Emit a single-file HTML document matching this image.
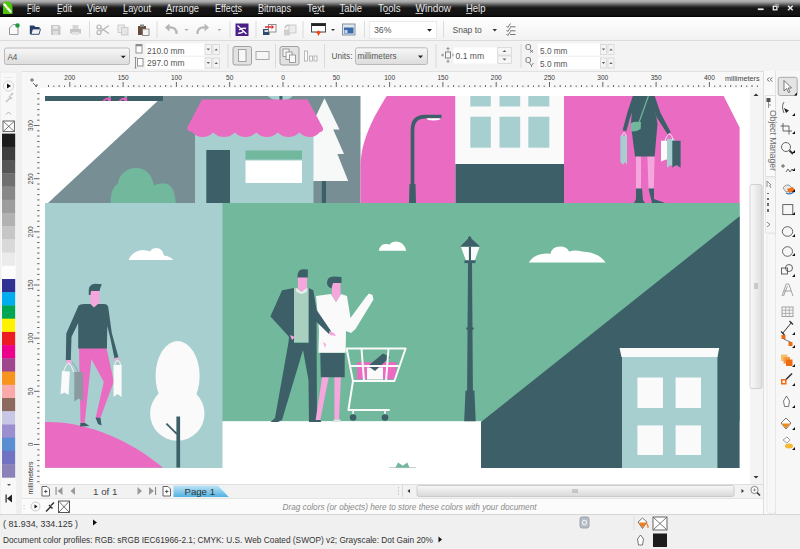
<!DOCTYPE html>
<html><head><meta charset="utf-8">
<style>
*{box-sizing:border-box}
html,body{margin:0;padding:0}
body{width:800px;height:549px;overflow:hidden;position:relative;background:#f0f0f0;font-family:"Liberation Sans",sans-serif;color:#333}
.a{position:absolute}
#menu{left:0;top:0;width:800px;height:17px;background:linear-gradient(#b8b8b8 0px,#a4a4a4 2px,#3a3a3a 6px,#161616 8px,#121212 15px,#000 17px)}
#menu span{position:absolute;top:3px;font-size:10px;color:#e6e6e6;line-height:12px}
#tb{left:0;top:17px;width:800px;height:24px;background:linear-gradient(#fefefe,#f3f3f3);border-bottom:1px solid #dcdcdc}
#pb{left:0;top:41px;width:800px;height:30px;background:#f3f3f3}
.sep{position:absolute;width:1px;background:#d8d8d8}
.fld{position:absolute;background:#fff;font-size:9.5px;color:#555;line-height:12px}
.combo{position:absolute;background:linear-gradient(#fafafa,#dedede);border:1px solid #b8b8b8;border-radius:2px;font-size:9.5px;color:#444}
#ruler-h{left:22px;top:71px;width:741px;height:17px;background:#f7f7f7;border-top:1px solid #e0e0e0}
#ruler-v{left:22px;top:88px;width:18px;height:410px;background:#f7f7f7}
#canvas{left:40px;top:88px;width:710px;height:396px;background:#fff}
#vscroll{left:750px;top:88px;width:13px;height:396px;background:#f4f4f4}
#nav{left:40px;top:484px;width:723px;height:14px;background:#f2f2f2;border-top:1px solid #dedede}
#dock{left:22px;top:498px;width:741px;height:16px;background:#fbfbfb;border-top:1px solid #e4e4e4}
#status{left:0;top:514px;width:800px;height:35px;background:#f0f0f0;border-top:1px solid #d6d6d6}
#pal{left:1px;top:73px;width:15px;height:441px;background:#f8f8f8}
#rdock{left:763px;top:71px;width:12px;height:443px;background:#f9f9f9;border-left:1px solid #ddd}
#tools{left:775px;top:71px;width:25px;height:443px;background:#f7f7f7;border-left:1px solid #e2e2e2}
.t9{font-size:9px;line-height:10px}
</style></head><body>
<div id="menu" class="a"></div>
<div id="tb" class="a"></div>
<div id="pb" class="a"></div>
<div id="ruler-h" class="a"></div>
<div id="ruler-v" class="a"></div>
<div id="canvas" class="a"></div>
<div id="vscroll" class="a"></div>
<div id="nav" class="a"></div>
<div id="dock" class="a"></div>
<div id="status" class="a"></div>
<div id="pal" class="a"></div>
<div id="rdock" class="a"></div>
<div id="tools" class="a"></div>

<svg class="a" style="left:0;top:0" width="800" height="549" viewBox="0 0 800 549">
<defs>
 <linearGradient id="gcombo" x1="0" y1="0" x2="0" y2="1"><stop offset="0" stop-color="#f8f8f8"/><stop offset="1" stop-color="#dcdcdc"/></linearGradient>
 <linearGradient id="gvthumb" x1="0" y1="0" x2="1" y2="0"><stop offset="0" stop-color="#fafafa"/><stop offset="1" stop-color="#dedede"/></linearGradient>
 <linearGradient id="ghthumb" x1="0" y1="0" x2="0" y2="1"><stop offset="0" stop-color="#f8f8f8"/><stop offset="1" stop-color="#d8d8d8"/></linearGradient>
 <linearGradient id="gtab" x1="0" y1="0" x2="0" y2="1"><stop offset="0" stop-color="#bfe3f5"/><stop offset="1" stop-color="#4fb2e2"/></linearGradient>
</defs>
<g id="chrome-top">
<g id="menutext" font-family="Liberation Sans" font-size="10.5" fill="#e8e8e8">
<text x="27" y="12" textLength="13" lengthAdjust="spacingAndGlyphs">File</text>
<rect x="27" y="13" width="4" height="0.8"/>
<text x="57" y="12" textLength="15" lengthAdjust="spacingAndGlyphs">Edit</text>
<rect x="57" y="13" width="4" height="0.8"/>
<text x="87" y="12" textLength="20" lengthAdjust="spacingAndGlyphs">View</text>
<rect x="87" y="13" width="5" height="0.8"/>
<text x="123" y="12" textLength="28" lengthAdjust="spacingAndGlyphs">Layout</text>
<rect x="123" y="13" width="4.5" height="0.8"/>
<text x="166" y="12" textLength="33" lengthAdjust="spacingAndGlyphs">Arrange</text>
<rect x="166" y="13" width="6" height="0.8"/>
<text x="215" y="12" textLength="27" lengthAdjust="spacingAndGlyphs">Effects</text>
<rect x="233" y="13" width="5" height="0.8"/>
<text x="258" y="12" textLength="33" lengthAdjust="spacingAndGlyphs">Bitmaps</text>
<rect x="258" y="13" width="5" height="0.8"/>
<text x="307" y="12" textLength="17.5" lengthAdjust="spacingAndGlyphs">Text</text>
<rect x="314" y="13" width="5" height="0.8"/>
<text x="339.5" y="12" textLength="22.5" lengthAdjust="spacingAndGlyphs">Table</text>
<rect x="339.5" y="13" width="4.5" height="0.8"/>
<text x="378" y="12" textLength="22.5" lengthAdjust="spacingAndGlyphs">Tools</text>
<rect x="385" y="13" width="5" height="0.8"/>
<text x="415.5" y="12" textLength="35.5" lengthAdjust="spacingAndGlyphs">Window</text>
<rect x="415.5" y="13" width="7.5" height="0.8"/>
<text x="466" y="12" textLength="19.5" lengthAdjust="spacingAndGlyphs">Help</text>
<rect x="466" y="13" width="6" height="0.8"/>
</g>
 <!-- corel logo -->
 <path d="M3.5,2.5 Q4,1.5 6,1.5 L9,1.5 Q12.5,3 12.5,8 L12.5,14 L3,14 L3,4 Z" fill="#4fc410"/>
 <path d="M4.5,4.5 L10.5,11.5" stroke="#f4fbe8" stroke-width="2.4" stroke-linecap="round"/>
 <path d="M6.5,5.5 L8.5,8" stroke="#b8d850" stroke-width="1"/>
 <!-- window controls -->
 <rect x="757.8" y="8.4" width="5.8" height="1.7" fill="#eee"/>
 <rect x="773.3" y="6.2" width="3.6" height="3.6" fill="none" stroke="#eee" stroke-width="1.3"/>
 <path d="M775,4.3 H778.3 V7.8" stroke="#bbb" stroke-width="0.8" fill="none"/>
 <path d="M788,5.8 L792.7,10.3 M792.7,5.8 L788,10.3" stroke="#eee" stroke-width="1.5"/>
 <!-- toolbar separators -->
 <g fill="#dcdcdc">
  <rect x="89" y="21" width="1" height="17"/><rect x="156.5" y="21" width="1" height="17"/>
  <rect x="229.5" y="21" width="1" height="17"/><rect x="255.5" y="21" width="1" height="17"/>
  <rect x="302.5" y="21" width="1" height="17"/><rect x="364" y="21" width="1" height="17"/>
  <rect x="443" y="21" width="1" height="17"/>
 </g>
 <!-- new -->
 <path d="M9.5,34.5 V28 L13,24.5 H18 V34.5 Z" fill="#fafafa" stroke="#8a8a8a" stroke-width="0.9"/>
 <circle cx="17.5" cy="25.5" r="2.2" fill="#1f9a3a"/>
 <!-- open -->
 <path d="M29.8,34.3 V25.5 H34 L35.5,27 H39.5 V34.3 Z" fill="#243e6a"/>
 <path d="M31,34.3 L32.5,29 H40.5 L39,34.3 Z" fill="#f2f2f2" stroke="#243e6a" stroke-width="0.8"/>
 <!-- save -->
 <path d="M51,25 H59 L60.5,26.5 V35 H51 Z" fill="#c8c8c8"/>
 <rect x="53" y="26" width="5" height="3" fill="#e8e8e8"/><rect x="53" y="31" width="5" height="4" fill="#dedede"/>
 <!-- print -->
 <rect x="72.5" y="25" width="6" height="4" fill="#d6d6d6"/>
 <rect x="70" y="29" width="11" height="4.5" fill="#c6c6c6"/><rect x="72" y="32" width="7" height="3" fill="#e2e2e2"/>
 <!-- cut -->
 <g stroke="#b4b4b4" stroke-width="1.2" fill="none"><circle cx="99" cy="27" r="2"/><circle cx="99" cy="32.5" r="2"/><path d="M100.5,28 L109,33.5 M100.5,31.5 L109,25.5"/></g>
 <!-- copy -->
 <rect x="118" y="25" width="6.5" height="7.5" fill="#eee" stroke="#c8c8c8" stroke-width="0.9"/>
 <rect x="121.5" y="27.5" width="6.5" height="7.5" fill="#e6e6e6" stroke="#c8c8c8" stroke-width="0.9"/>
 <!-- paste -->
 <rect x="138" y="26" width="8" height="9" fill="#6a4a3a"/><rect x="140" y="24.5" width="4" height="2.5" fill="#888"/>
 <rect x="142.5" y="29" width="6.5" height="6.5" fill="#f4f4f4" stroke="#777" stroke-width="0.8"/>
 <!-- undo/redo -->
 <path d="M176.5,34 Q177,27 169,27.5 L166.5,27.5" stroke="#b4b4b4" stroke-width="2.2" fill="none"/>
 <path d="M165,27.5 L169.5,23.5 L169.5,31.5 Z" fill="#b4b4b4"/>
 <path d="M184.5,29 H188.5 L186.5,31 Z" fill="#aaa"/>
 <path d="M197.5,34 Q197,27 205,27.5 L207.5,27.5" stroke="#b8b8b8" stroke-width="2.2" fill="none"/>
 <path d="M209,27.5 L204.5,23.5 L204.5,31.5 Z" fill="#b8b8b8"/>
 <path d="M217.5,29 H221.5 L219.5,31 Z" fill="#aaa"/>
 <!-- purple corel connect -->
 <rect x="235.5" y="23.5" width="13" height="12.5" fill="#4a1f8a"/>
 <path d="M237.5,25.5 L246.5,34 M239,30 Q242,27.5 246,28.5 M238,33 Q241,34 244,31" stroke="#fff" stroke-width="1.3" fill="none"/>
 <!-- import / export -->
 <rect x="263" y="29" width="6.5" height="6" fill="#2e4a6a"/><rect x="264.5" y="30" width="3.5" height="2" fill="#ddd"/>
 <rect x="268.5" y="24.5" width="7.5" height="7.5" fill="#fafafa" stroke="#777" stroke-width="0.8"/>
 <path d="M265,27 H271.5" stroke="#e02020" stroke-width="1.4"/><path d="M271.5,24.8 L274,27 L271.5,29.2 Z" fill="#e02020"/>
 <rect x="284" y="29.5" width="6" height="6" fill="#d0d0d0"/><rect x="289" y="25" width="7" height="8" fill="#ececec" stroke="#c4c4c4" stroke-width="0.8"/>
 <path d="M285,28 Q286,24.5 289,25.5" stroke="#c0c0c0" stroke-width="1.4" fill="none"/>
 <!-- app launcher -->
 <rect x="311.5" y="23.5" width="14" height="8.5" fill="#fdfdfd" stroke="#444" stroke-width="1"/>
 <rect x="311.5" y="23.5" width="14" height="2.5" fill="#222"/>
 <path d="M315.5,33 L318.5,30.5 L321.5,33 L320,33 L318.5,36 L317,33 Z" fill="#f04010"/>
 <path d="M331,29 H335 L333,31 Z" fill="#333"/>
 <!-- welcome -->
 <rect x="342.5" y="24" width="12.5" height="11" fill="#dfe6ee" stroke="#7a8a9a" stroke-width="0.9"/>
 <rect x="344" y="27.5" width="9.5" height="6" fill="#3a6aa8"/><rect x="344.5" y="30" width="3" height="3" fill="#c8d8ec"/>
 <!-- zoom combo -->
 <rect x="369.5" y="21.5" width="67" height="17" fill="#fff" stroke="#e4e4e4" stroke-width="0.8"/>
 <text x="374" y="33.2" font-family="Liberation Sans" font-size="9.5" fill="#555" textLength="17.5" lengthAdjust="spacingAndGlyphs">36%</text>
 <path d="M427,29 H432 L429.5,31.7 Z" fill="#222"/>
 <text x="452.5" y="33" font-family="Liberation Sans" font-size="9.5" fill="#555" textLength="29.3" lengthAdjust="spacingAndGlyphs">Snap to</text>
 <path d="M492.5,29 H497 L494.8,31.5 Z" fill="#333"/>
 <g stroke="#666" stroke-width="0.9" fill="none"><path d="M506.5,26 L507.8,27.5 L510.5,23.5 M506.5,30 L507.8,31.5 L510.5,27.5 M506.5,34 L507.8,35.5 L510.5,31.5 M510,26.8 H515.5 M510,30.8 H515.5 M510,34.5 H515.5"/></g>

 <!-- property bar -->
 <rect x="4.5" y="48" width="125" height="16.5" rx="2" fill="url(#gcombo)" stroke="#b4b4b4" stroke-width="0.9"/>
 <text x="7.4" y="60" font-family="Liberation Sans" font-size="9.8" fill="#555" textLength="10" lengthAdjust="spacingAndGlyphs">A4</text>
 <path d="M120.7,55.7 H125.8 L123.25,58.2 Z" fill="#222"/>
 <!-- dims -->
 <rect x="136" y="44.5" width="6" height="8.5" fill="#fff" stroke="#8a8a8a" stroke-width="0.9"/>
 <rect x="136" y="44.5" width="6" height="1.8" fill="#8a8a8a"/>
 <path d="M135.5,57.5 V68 M134.5,57.5 H136.5 M134.5,68 H136.5" stroke="#777" stroke-width="0.8"/>
 <rect x="137.5" y="58.5" width="5.5" height="7.5" fill="#fff" stroke="#8a8a8a" stroke-width="0.9"/>
 <rect x="145.5" y="43.5" width="59.5" height="12" fill="#fff"/>
 <rect x="145.5" y="57" width="59.5" height="12" fill="#fff"/>
 <text x="147" y="53.6" font-family="Liberation Sans" font-size="9.6" fill="#555" textLength="37.5" lengthAdjust="spacingAndGlyphs">210.0 mm</text>
 <text x="147" y="66.4" font-family="Liberation Sans" font-size="9.6" fill="#555" textLength="37.5" lengthAdjust="spacingAndGlyphs">297.0 mm</text>
 <g fill="#f4f4f4" stroke="#d0d0d0" stroke-width="0.7">
  <rect x="205" y="44.5" width="6.5" height="10"/><rect x="213" y="44.5" width="6.5" height="10"/>
  <rect x="205" y="58" width="6.5" height="10"/><rect x="213" y="58" width="6.5" height="10"/>
 </g>
 <g fill="#666"><path d="M206.5,48.5 H210 L208.25,50.5 Z M214.5,50.5 H218 L216.25,48.5 Z M206.5,62 H210 L208.25,64 Z M214.5,64 H218 L216.25,62 Z"/></g>
 <rect x="227.5" y="44" width="1" height="24" fill="#dadada"/>
 <rect x="233" y="46.5" width="18.5" height="18.5" rx="2" fill="#e2e2e2" stroke="#9a9a9a" stroke-width="0.9"/>
 <rect x="238.5" y="49.5" width="7.5" height="12" fill="#f8f8f8" stroke="#9a9a9a" stroke-width="0.9"/>
 <rect x="256" y="51.5" width="13" height="8" fill="#f6f6f6" stroke="#a0a0a0" stroke-width="0.9"/>
 <rect x="275" y="44" width="1" height="24" fill="#dadada"/>
 <rect x="280" y="46.5" width="19" height="18.5" rx="2" fill="#e2e2e2" stroke="#9a9a9a" stroke-width="0.9"/>
 <rect x="283" y="49" width="6" height="7.5" fill="#f8f8f8" stroke="#888" stroke-width="0.8"/>
 <rect x="286" y="52" width="6" height="7.5" fill="#f8f8f8" stroke="#888" stroke-width="0.8"/>
 <rect x="289.5" y="55" width="6" height="7.5" fill="#f8f8f8" stroke="#888" stroke-width="0.8"/>
 <g fill="#fafafa" stroke="#aaa" stroke-width="0.8"><rect x="304.5" y="51" width="3" height="10"/><rect x="309.5" y="56" width="3" height="5"/><rect x="314" y="56" width="3" height="5"/></g>
 <rect x="324" y="44" width="1" height="24" fill="#dadada"/>
 <text x="331.5" y="59" font-family="Liberation Sans" font-size="9.5" fill="#555" textLength="21" lengthAdjust="spacingAndGlyphs">Units:</text>
 <rect x="355.5" y="47.8" width="72" height="16.7" rx="2" fill="url(#gcombo)" stroke="#b4b4b4" stroke-width="0.9"/>
 <text x="357.5" y="59.2" font-family="Liberation Sans" font-size="9.5" fill="#555" textLength="39" lengthAdjust="spacingAndGlyphs">millimeters</text>
 <path d="M418,55.5 H423 L420.5,58.2 Z" fill="#222"/>
 <rect x="435.5" y="44" width="1" height="24" fill="#dadada"/>
 <g stroke="#777" stroke-width="0.9" fill="none"><rect x="445.5" y="52" width="5" height="6"/><path d="M448,48 V50.5 M448,59.5 V62 M442,55 H444 M452,55 H454.5"/></g>
 <path d="M446.5,49 L448,47.5 L449.5,49 M446.5,61 L448,62.5 L449.5,61 M443,53.5 L441.5,55 L443,56.5 M453,53.5 L454.5,55 L453,56.5" stroke="#777" stroke-width="0.8" fill="none"/>
 <rect x="453.6" y="47.5" width="43.5" height="16" fill="#fff"/>
 <text x="455.5" y="59" font-family="Liberation Sans" font-size="9.6" fill="#555" textLength="28.7" lengthAdjust="spacingAndGlyphs">0.1 mm</text>
 <rect x="497.8" y="47.5" width="13.5" height="7.5" fill="#f6f6f6" stroke="#d0d0d0" stroke-width="0.7"/>
 <rect x="497.8" y="56" width="13.5" height="7.5" fill="#f6f6f6" stroke="#d0d0d0" stroke-width="0.7"/>
 <path d="M502.5,52 H506.5 L504.5,50 Z M502.5,58.5 H506.5 L504.5,60.5 Z" fill="#666"/>
 <rect x="520.5" y="44" width="1" height="24" fill="#dadada"/>
 <g fill="none" stroke="#777" stroke-width="0.9"><rect x="526" y="44.5" width="4.5" height="5" rx="1.5"/><rect x="526" y="57.5" width="4.5" height="5" rx="1.5"/></g>
 <path d="M530,50 L533,52.5 M533,50 L530,52.5 M529.5,63 L531.5,65.5 L533.5,63 M531.5,65.5 V67" stroke="#666" stroke-width="0.8" fill="none"/>
 <rect x="538" y="43.5" width="62" height="12" fill="#fff"/>
 <rect x="538" y="57" width="62" height="12" fill="#fff"/>
 <text x="540" y="53.5" font-family="Liberation Sans" font-size="9.6" fill="#555" textLength="27.5" lengthAdjust="spacingAndGlyphs">5.0 mm</text>
 <text x="540" y="66.5" font-family="Liberation Sans" font-size="9.6" fill="#555" textLength="27.5" lengthAdjust="spacingAndGlyphs">5.0 mm</text>
 <g fill="#f4f4f4" stroke="#d0d0d0" stroke-width="0.7">
  <rect x="600.5" y="44.5" width="6" height="10"/><rect x="608" y="44.5" width="6" height="10"/>
  <rect x="600.5" y="58" width="6" height="10"/><rect x="608" y="58" width="6" height="10"/>
 </g>
 <g fill="#666"><path d="M601.8,48.5 H605.2 L603.5,50.5 Z M609.3,50.5 H612.7 L611,48.5 Z M601.8,62 H605.2 L603.5,64 Z M609.3,64 H612.7 L611,62 Z"/></g>
</g>
<g id="chrome-main">
 <!-- palette -->
 <g stroke="#d8d8d8" stroke-width="0.6">
 </g>
 <text x="4" y="78" font-family="Liberation Sans" font-size="7" fill="#aaa" letter-spacing="1">...</text>
 <circle cx="8.5" cy="86" r="5" fill="#fbfbfb" stroke="#c8c8c8" stroke-width="0.8"/>
 <path d="M7,83.5 L11,86 L7,88.5 Z" fill="#111"/>
 <path d="M6,102 L10,98 M9,96 L12,99 M10.5,95.5 L13,93" stroke="#c4c4c4" stroke-width="1.6"/>
 <path d="M6,114.5 L8.5,112 L11,114.5" stroke="#b0b0b0" stroke-width="1" fill="none"/>
 <rect x="3" y="121" width="11.4" height="10.6" fill="#fff" stroke="#555" stroke-width="0.9"/>
 <path d="M3.5,121.5 L14,131.2 M14,121.5 L3.5,131.2" stroke="#555" stroke-width="0.8"/>
 <g id="swatches">
  <rect x="2" y="133.60" width="13.2" height="13.6" fill="#1c1c1c"/>
  <rect x="2" y="146.82" width="13.2" height="13.6" fill="#3d3d3d"/>
  <rect x="2" y="160.04" width="13.2" height="13.6" fill="#565656"/>
  <rect x="2" y="173.26" width="13.2" height="13.6" fill="#6f6f6f"/>
  <rect x="2" y="186.48" width="13.2" height="13.6" fill="#878787"/>
  <rect x="2" y="199.70" width="13.2" height="13.6" fill="#9d9d9d"/>
  <rect x="2" y="212.92" width="13.2" height="13.6" fill="#b2b2b2"/>
  <rect x="2" y="226.14" width="13.2" height="13.6" fill="#c6c6c6"/>
  <rect x="2" y="239.36" width="13.2" height="13.6" fill="#d9d9d9"/>
  <rect x="2" y="252.58" width="13.2" height="13.6" fill="#ebebeb"/>
  <rect x="2" y="265.80" width="13.2" height="13.6" fill="#fdfdfd"/>
  <rect x="2" y="279.02" width="13.2" height="13.6" fill="#2e3192"/>
  <rect x="2" y="292.24" width="13.2" height="13.6" fill="#00aeef"/>
  <rect x="2" y="305.46" width="13.2" height="13.6" fill="#00a651"/>
  <rect x="2" y="318.68" width="13.2" height="13.6" fill="#fff200"/>
  <rect x="2" y="331.90" width="13.2" height="13.6" fill="#ed1c24"/>
  <rect x="2" y="345.12" width="13.2" height="13.6" fill="#ec008c"/>
  <rect x="2" y="358.34" width="13.2" height="13.6" fill="#a0468e"/>
  <rect x="2" y="371.56" width="13.2" height="13.6" fill="#f7941d"/>
  <rect x="2" y="384.78" width="13.2" height="13.6" fill="#f9aaaa"/>
  <rect x="2" y="398.00" width="13.2" height="13.6" fill="#8c6b5e"/>
  <rect x="2" y="411.22" width="13.2" height="13.6" fill="#c8c8e6"/>
  <rect x="2" y="424.44" width="13.2" height="13.6" fill="#9b8fcf"/>
  <rect x="2" y="437.66" width="13.2" height="13.6" fill="#5a8ed0"/>
  <rect x="2" y="450.88" width="13.2" height="13.6" fill="#7272c2"/>
  <rect x="2" y="464.10" width="13.2" height="13.6" fill="#8a82b8"/>
 </g>
 <path d="M7,484 H11 L9,486 Z" fill="#555"/>
 <rect x="5.5" y="494.5" width="1.2" height="8" fill="#222"/><path d="M12,494.5 L7,498.5 L12,502.5 Z" fill="#222"/>

 <!-- vertical scrollbar -->
 <path d="M753.5,96 L756,93.5 L758.5,96 Z" fill="#333"/>
 <rect x="750" y="184.5" width="12" height="204" rx="2" fill="url(#gvthumb)" stroke="#c8c8c8" stroke-width="0.8"/>
 <path d="M754,284 H758 M754,286 H758 M754,288 H758" stroke="#888" stroke-width="0.7"/>
 <path d="M753.5,476 H758.5 L756,478.5 Z" fill="#333"/>
 <!-- page nav row -->
 <g stroke="#555" stroke-width="0.9" fill="#fff">
  <path d="M42,486.5 H47 L49.5,489 V496 H42 Z"/>
  <path d="M163,486.5 H168 L170.5,489 V496 H163 Z"/>
 </g>
 <path d="M44,491.5 H47.5 M45.75,489.75 V493.25 M165,491.5 H168.5 M166.75,489.75 V493.25" stroke="#333" stroke-width="0.8"/>
 <rect x="55.5" y="487" width="1.1" height="8" fill="#888"/><path d="M62.5,487 L57.5,491 L62.5,495 Z" fill="#999"/>
 <path d="M75,487 L70.5,491 L75,495 Z" fill="#999"/>
 <text x="93" y="495.2" font-family="Liberation Sans" font-size="9.8" fill="#444" textLength="24.5" lengthAdjust="spacingAndGlyphs">1 of 1</text>
 <path d="M137.5,487 L142,491 L137.5,495 Z" fill="#999"/>
 <path d="M149,487 L154,491 L149,495 Z" fill="#999"/><rect x="155" y="487" width="1.1" height="8" fill="#888"/>
 <path d="M173.5,485.5 H218 L229,497 H173.5 Z" fill="url(#gtab)"/>
 <path d="M218,485.5 L223,485.5 L229,497" fill="#e9f4fa"/>
 <text x="184.5" y="495" font-family="Liberation Sans" font-size="9.8" fill="#333" textLength="30.5" lengthAdjust="spacingAndGlyphs">Page 1</text>
 <!-- hscroll -->
 <g fill="#aaa"><circle cx="398.5" cy="487.8" r="0.6"/><circle cx="398.5" cy="490.8" r="0.6"/><circle cx="398.5" cy="493.8" r="0.6"/></g>
 <rect x="402" y="485" width="1" height="12" fill="#dadada"/>
 <path d="M407.5,491 L410,489 L410,493 Z" fill="#333"/>
 <rect x="417" y="485.5" width="317" height="11" rx="2" fill="url(#ghthumb)" stroke="#c4c4c4" stroke-width="0.8"/>
 <path d="M573,489 V493 M575,489 V493 M577,489 V493" stroke="#888" stroke-width="0.7"/>
 <path d="M741.5,489 L744,491 L741.5,493 Z" fill="#333"/>
 <circle cx="754.5" cy="490" r="3.6" fill="#fff" stroke="#777" stroke-width="0.9"/>
 <path d="M752.8,490 H756.2 M754.5,488.3 V491.7" stroke="#777" stroke-width="0.7"/>
 <path d="M757,492.5 L760,495.5" stroke="#333" stroke-width="1.6"/>
 <!-- color docker row -->
 <text x="23" y="509" font-family="Liberation Sans" font-size="7" fill="#999" letter-spacing="0.5">:</text>
 <circle cx="35.5" cy="506.5" r="4.5" fill="#fbfbfb" stroke="#bbb" stroke-width="0.8"/>
 <path d="M34.5,504.5 L37.5,506.5 L34.5,508.5 Z" fill="#111"/>
 <path d="M46,511.5 L50.5,507 M49,505 L52.5,508.5 M51,505.5 L54,502.5" stroke="#333" stroke-width="1.5"/>
 <rect x="58.5" y="501" width="11" height="11.5" fill="#fff" stroke="#444" stroke-width="0.9"/>
 <path d="M59,501.5 L69,512 M69,501.5 L59,512" stroke="#444" stroke-width="0.8"/>
 <text x="282.5" y="510" font-family="Liberation Sans" font-style="italic" font-size="8.5" fill="#8a8a8a" textLength="254" lengthAdjust="spacingAndGlyphs">Drag colors (or objects) here to store these colors with your document</text>
 <!-- status bar -->
 <text x="3" y="526.5" font-family="Liberation Sans" font-size="9.6" fill="#333" textLength="75" lengthAdjust="spacingAndGlyphs">( 81.934, 334.125 )</text>
 <path d="M93,519.5 L97,522.5 L93,525.5 Z" fill="#111"/>
 <text x="3" y="543" font-family="Liberation Sans" font-size="9.6" fill="#333" textLength="430" lengthAdjust="spacingAndGlyphs">Document color profiles: RGB: sRGB IEC61966-2.1; CMYK: U.S. Web Coated (SWOP) v2; Grayscale: Dot Gain 20%</text>
 <path d="M438.5,536.5 L442,539.5 L438.5,542.5 Z" fill="#111"/>
 <rect x="580" y="517" width="9" height="11" rx="2" fill="#b8bec8" stroke="#8a94a0" stroke-width="0.8"/>
 <circle cx="584.5" cy="522.5" r="2.2" fill="none" stroke="#fff" stroke-width="0.9"/>
 <rect x="633.5" y="516" width="1" height="14" fill="#ddd"/>
 <path d="M638,522 L642.5,518 L647,522 L642.5,528.5 Z" fill="#fff" stroke="#555" stroke-width="0.8"/>
 <path d="M638.5,522.5 L646.5,522.5 L642.5,528 Z" fill="#f07f20"/>
 <path d="M646,523 Q648.5,525 648,528" stroke="#f07f20" stroke-width="1.2" fill="none"/>
 <rect x="653" y="517" width="14" height="13" fill="#fff" stroke="#555" stroke-width="0.9"/>
 <path d="M653.5,517.5 L666.5,529.5 M666.5,517.5 L653.5,529.5" stroke="#555" stroke-width="0.8"/>
 <path d="M640.5,535 L643.5,539 L642.5,545 H638.5 L637.5,539 Z" fill="#fff" stroke="#555" stroke-width="0.8"/>
 <rect x="653" y="533.5" width="14" height="13.5" fill="#1c1c1c"/>

 <!-- right docker tabs -->
 <path d="M769.5,77.5 L767,79.5 L769.5,81.5 M772.5,77.5 L770,79.5 L772.5,81.5" stroke="#666" stroke-width="0.9" fill="none"/>
 <rect x="765.5" y="95.5" width="10" height="81" fill="#fafafa" stroke="#d8d8d8" stroke-width="0.7"/>
 <rect x="766.5" y="98" width="4" height="4" fill="#555"/><path d="M768.5,102 V108 M768.5,105 H771" stroke="#777" stroke-width="0.8"/>
 <text transform="translate(769.6,110) rotate(90)" font-family="Liberation Sans" font-size="8.5" fill="#6a6a6a" textLength="61" lengthAdjust="spacingAndGlyphs">Object Manager</text>
 <rect x="765.5" y="178" width="10" height="55" fill="#f6f6f6" stroke="#dcdcdc" stroke-width="0.7"/>
 <rect x="767" y="233.5" width="8.5" height="280" rx="3" fill="#f7f7f7" stroke="#e4e4e4" stroke-width="0.7"/>
 <path d="M767,181 L771,185 L769.5,185.5 L771,188 M767,181 V187" stroke="#777" stroke-width="0.8" fill="none"/>
 <path d="M768,193 V194 M768,198 V200 M768,203 V206 M768,209 V212" stroke="#333" stroke-width="1.4"/>
 <path d="M767,222 L770,224.5 L767,227" stroke="#666" stroke-width="0.8" fill="none"/>
 <!-- toolbox -->
 <rect x="778.2" y="77.3" width="19" height="18.2" rx="2" fill="#e4e4e4" stroke="#a4a4a4" stroke-width="0.9"/>
 <path d="M784,80.5 V91 L786.5,88.5 L788.5,92.5 L790,91.8 L788,88 L791.5,88 Z" fill="#fff" stroke="#555" stroke-width="0.8"/>
 <g fill="#111">
  <path d="M797,92.5 V95.5 H794 Z"/>
 </g>
 <g stroke="#555" stroke-width="0.9" fill="none">
  <!-- shape tool -->
  <path d="M784,102 Q781,106 784,113"/>
  <!-- crop -->
  <path d="M783,123 V131 H792 M780.5,126 H789 V134.5"/>
  <!-- zoom -->
  <circle cx="786" cy="147" r="4.5"/>
  <!-- freehand -->
  <path d="M783,164 V168 M781,166 H785 M786,172 L788,169 L790,172 L792,169 L794,171"/>
  <!-- rect -->
  <rect x="782.8" y="204.6" width="10" height="10"/>
  <!-- ellipse -->
  <ellipse cx="787.5" cy="231.5" rx="5.2" ry="4.8"/>
  <!-- polygon -->
  <ellipse cx="787.5" cy="251.5" rx="5" ry="4.8"/>
  <!-- basic shapes -->
  <rect x="781.5" y="268" width="6" height="6"/><circle cx="789" cy="268" r="3.5"/>
  <!-- text -->
  <path d="M782,296 L786.2,284 L788.8,284 L793,296 M784,291 H791 M783.5,296 L787.5,286" stroke="#999" stroke-width="0.9"/>
  <!-- table -->
  <rect x="782" y="307" width="11" height="9.5" stroke="#999"/><path d="M782,310.2 H793 M782,313.4 H793 M785.7,307 V316.5 M789.3,307 V316.5" stroke="#aaa"/>
 </g>
 <path d="M784,108 L789,110.5 L786,113 Z" fill="#222"/>
 <path d="M789.5,150.5 L793,154" stroke="#333" stroke-width="1.8"/>
 <path d="M783,188 Q785,184 789,185 L792,188 Q791,192 786,192 Z" fill="#e8e8e8" stroke="#777" stroke-width="0.7"/>
 <path d="M787,189 L793,187 L795,191 L789,193 Z" fill="#f07020"/>
 <path d="M786,193 Q790,195 794,192" stroke="#2a7ac8" stroke-width="1.2" fill="none"/>
<path d="M782.5,333.5 L791.5,322.5" stroke="#333" stroke-width="1"/>
 <path d="M781,331.5 L784.5,335 M789.5,321 L793,324.5" stroke="#333" stroke-width="1.3"/>
 <rect x="781.5" y="335" width="4" height="4" fill="#f06a10"/><rect x="788.5" y="342" width="4" height="4" fill="#f06a10"/>
 <path d="M783.5,339 L790.5,342" stroke="#555" stroke-width="0.8"/>
 <rect x="781" y="354.5" width="6.5" height="6.5" fill="#f5c070"/><rect x="783.5" y="357" width="6.5" height="6.5" fill="#f59a40"/><rect x="786" y="359.5" width="6.5" height="6.5" fill="#f06a10"/>
 <path d="M785.5,380 L792,373.5" stroke="#333" stroke-width="1.6"/><rect x="781" y="379" width="5.5" height="5.5" fill="#f06a10"/><rect x="782.5" y="380.5" width="2.5" height="2.5" fill="#fff"/>
 <path d="M786.5,396 L789.5,401 L788.5,406.5 H784.5 L783.5,401 Z" fill="#fff" stroke="#555" stroke-width="0.8"/>
 <path d="M781,423 L786,418 L791,423 L786,429 Z" fill="#fff" stroke="#555" stroke-width="0.8"/><path d="M781.5,423.5 L790.5,423.5 L786,428.5 Z" fill="#f08a20"/>
 <path d="M783,440 L787,437 L790,440 L787,443 Z" fill="#fff" stroke="#777" stroke-width="0.7"/><ellipse cx="789" cy="446" rx="4" ry="2.5" fill="#f5b830"/>
 <g fill="#111">
  <path d="M795,113 V116 H792 Z M795,131 V134 H792 Z M795,150 V153 H792 Z M795,168 V171 H792 Z M795,189 V192 H792 Z M795,212 V215 H792 Z M795,234 V237 H792 Z M795,253 V256 H792 Z M795,274 V277 H792 Z M795,332 V335 H792 Z M795,345 V348 H792 Z M795,364 V367 H792 Z M795,383 V386 H792 Z M795,405 V408 H792 Z M795,427 V430 H792 Z M795,447 V450 H792 Z"/>
 </g>
</g>
<g stroke="#555" stroke-width="0.9" fill="none"><path d="M30,80 H34 M32,78 V82 M33,83 L37,87 M35,86 H37 V84"/></g>
<g id="rulers" font-family="Liberation Sans" font-size="7.8" fill="#3a3a3a">
<path d="M48.5,85V87M53.8,85.5V87M59.1,85V87M64.5,85.5V87M69.8,82V87M75.1,85.5V87M80.5,85V87M85.8,85.5V87M91.1,85V87M96.4,85.5V87M101.8,85V87M107.1,85.5V87M112.4,85V87M117.8,85.5V87M123.1,82V87M128.4,85.5V87M133.8,85V87M139.1,85.5V87M144.4,85V87M149.8,85.5V87M155.1,85V87M160.4,85.5V87M165.7,85V87M171.1,85.5V87M176.4,82V87M181.7,85.5V87M187.1,85V87M192.4,85.5V87M197.7,85V87M203.1,85.5V87M208.4,85V87M213.7,85.5V87M219.0,85V87M224.4,85.5V87M229.7,82V87M235.0,85.5V87M240.4,85V87M245.7,85.5V87M251.0,85V87M256.4,85.5V87M261.7,85V87M267.0,85.5V87M272.3,85V87M277.7,85.5V87M283.0,82V87M288.3,85.5V87M293.7,85V87M299.0,85.5V87M304.3,85V87M309.6,85.5V87M315.0,85V87M320.3,85.5V87M325.6,85V87M331.0,85.5V87M336.3,82V87M341.6,85.5V87M347.0,85V87M352.3,85.5V87M357.6,85V87M362.9,85.5V87M368.3,85V87M373.6,85.5V87M378.9,85V87M384.3,85.5V87M389.6,82V87M394.9,85.5V87M400.3,85V87M405.6,85.5V87M410.9,85V87M416.2,85.5V87M421.6,85V87M426.9,85.5V87M432.2,85V87M437.6,85.5V87M442.9,82V87M448.2,85.5V87M453.6,85V87M458.9,85.5V87M464.2,85V87M469.6,85.5V87M474.9,85V87M480.2,85.5V87M485.5,85V87M490.9,85.5V87M496.2,82V87M501.5,85.5V87M506.9,85V87M512.2,85.5V87M517.5,85V87M522.9,85.5V87M528.2,85V87M533.5,85.5V87M538.8,85V87M544.2,85.5V87M549.5,82V87M554.8,85.5V87M560.2,85V87M565.5,85.5V87M570.8,85V87M576.2,85.5V87M581.5,85V87M586.8,85.5V87M592.1,85V87M597.5,85.5V87M602.8,82V87M608.1,85.5V87M613.5,85V87M618.8,85.5V87M624.1,85V87M629.5,85.5V87M634.8,85V87M640.1,85.5V87M645.4,85V87M650.8,85.5V87M656.1,82V87M661.4,85.5V87M666.8,85V87M672.1,85.5V87M677.4,85V87M682.8,85.5V87M688.1,85V87M693.4,85.5V87M698.7,85V87M704.1,85.5V87M709.4,82V87M714.7,85.5V87M720.1,85V87M725.4,85.5V87M730.7,85V87M736.0,85.5V87M741.4,85V87M746.7,85.5V87M752.0,85V87M757.4,85.5V87" stroke="#555" stroke-width="0.9"/>
<text x="69.8" y="80.3" text-anchor="middle" textLength="10.9" lengthAdjust="spacingAndGlyphs">200</text>
<text x="123.1" y="80.3" text-anchor="middle" textLength="10.9" lengthAdjust="spacingAndGlyphs">150</text>
<text x="176.4" y="80.3" text-anchor="middle" textLength="10.9" lengthAdjust="spacingAndGlyphs">100</text>
<text x="229.7" y="80.3" text-anchor="middle" textLength="7.3" lengthAdjust="spacingAndGlyphs">50</text>
<text x="283.0" y="80.3" text-anchor="middle" textLength="3.7" lengthAdjust="spacingAndGlyphs">0</text>
<text x="336.3" y="80.3" text-anchor="middle" textLength="7.3" lengthAdjust="spacingAndGlyphs">50</text>
<text x="389.6" y="80.3" text-anchor="middle" textLength="10.9" lengthAdjust="spacingAndGlyphs">100</text>
<text x="442.9" y="80.3" text-anchor="middle" textLength="10.9" lengthAdjust="spacingAndGlyphs">150</text>
<text x="496.2" y="80.3" text-anchor="middle" textLength="10.9" lengthAdjust="spacingAndGlyphs">200</text>
<text x="549.5" y="80.3" text-anchor="middle" textLength="10.9" lengthAdjust="spacingAndGlyphs">250</text>
<text x="602.8" y="80.3" text-anchor="middle" textLength="10.9" lengthAdjust="spacingAndGlyphs">300</text>
<text x="656.1" y="80.3" text-anchor="middle" textLength="10.9" lengthAdjust="spacingAndGlyphs">350</text>
<text x="709.4" y="80.3" text-anchor="middle" textLength="10.9" lengthAdjust="spacingAndGlyphs">400</text>
<text x="725" y="80.6" font-size="7.5" fill="#444" textLength="34.5" lengthAdjust="spacingAndGlyphs">millimeters</text>
<path d="M37.2,481.7H39.5M37.2,476.4H39.5M37.2,471.1H39.5M37.2,465.8H39.5M37.2,460.4H39.5M37.2,455.1H39.5M37.2,449.8H39.5M34,444.5H39.5M37.2,439.2H39.5M37.2,433.9H39.5M37.2,428.6H39.5M37.2,423.2H39.5M37.2,417.9H39.5M37.2,412.6H39.5M37.2,407.3H39.5M37.2,402.0H39.5M37.2,396.7H39.5M34,391.3H39.5M37.2,386.0H39.5M37.2,380.7H39.5M37.2,375.4H39.5M37.2,370.1H39.5M37.2,364.8H39.5M37.2,359.4H39.5M37.2,354.1H39.5M37.2,348.8H39.5M37.2,343.5H39.5M34,338.2H39.5M37.2,332.9H39.5M37.2,327.5H39.5M37.2,322.2H39.5M37.2,316.9H39.5M37.2,311.6H39.5M37.2,306.3H39.5M37.2,301.0H39.5M37.2,295.6H39.5M37.2,290.3H39.5M34,285.0H39.5M37.2,279.7H39.5M37.2,274.4H39.5M37.2,269.1H39.5M37.2,263.7H39.5M37.2,258.4H39.5M37.2,253.1H39.5M37.2,247.8H39.5M37.2,242.5H39.5M37.2,237.2H39.5M34,231.8H39.5M37.2,226.5H39.5M37.2,221.2H39.5M37.2,215.9H39.5M37.2,210.6H39.5M37.2,205.3H39.5M37.2,199.9H39.5M37.2,194.6H39.5M37.2,189.3H39.5M37.2,184.0H39.5M34,178.7H39.5M37.2,173.4H39.5M37.2,168.0H39.5M37.2,162.7H39.5M37.2,157.4H39.5M37.2,152.1H39.5M37.2,146.8H39.5M37.2,141.5H39.5M37.2,136.1H39.5M37.2,130.8H39.5M34,125.5H39.5M37.2,120.2H39.5M37.2,114.9H39.5M37.2,109.6H39.5M37.2,104.2H39.5M37.2,98.9H39.5M37.2,93.6H39.5" stroke="#555" stroke-width="0.9"/>
<text transform="translate(33.3,444.5) rotate(-90)" text-anchor="middle" textLength="3.7" lengthAdjust="spacingAndGlyphs">0</text>
<text transform="translate(33.3,391.3) rotate(-90)" text-anchor="middle" textLength="7.3" lengthAdjust="spacingAndGlyphs">50</text>
<text transform="translate(33.3,338.2) rotate(-90)" text-anchor="middle" textLength="10.9" lengthAdjust="spacingAndGlyphs">100</text>
<text transform="translate(33.3,285.0) rotate(-90)" text-anchor="middle" textLength="10.9" lengthAdjust="spacingAndGlyphs">150</text>
<text transform="translate(33.3,231.8) rotate(-90)" text-anchor="middle" textLength="10.9" lengthAdjust="spacingAndGlyphs">200</text>
<text transform="translate(33.3,178.7) rotate(-90)" text-anchor="middle" textLength="10.9" lengthAdjust="spacingAndGlyphs">250</text>
<text transform="translate(33.3,125.5) rotate(-90)" text-anchor="middle" textLength="10.9" lengthAdjust="spacingAndGlyphs">300</text>
<text transform="translate(33.3,478) rotate(-90)" text-anchor="middle" font-size="7.8" fill="#333" textLength="33" lengthAdjust="spacingAndGlyphs">millimeters</text>
</g>
<!-- ILLUSTRATION -->
<g id="illus">
 <!-- top row -->
 <polygon points="163,96 360.5,96 360.5,203 48,203" fill="#778f94"/>
 <rect x="45" y="96" width="118" height="5" fill="#3c5f68"/>
 <path d="M102.2,101 Q105,97.6 110.9,97.3 L110.9,101 L108,101 Q108.5,99.5 107.5,99.4 Q105,100 104.5,101 Z M118.4,101 Q121.2,97.6 127.1,97.3 L127.1,101 L124.2,101 Q124.7,99.5 123.7,99.4 Q121.2,100 120.7,101 Z" fill="#ea5fc4"/>
 <rect x="108.3" y="95.9" width="2.7" height="1.5" fill="#71b89d"/><rect x="124.5" y="95.9" width="2.7" height="1.5" fill="#71b89d"/>
 <path d="M110.6,203 C110.6,193 113,187 118,183.5 C119,174 127,168 136,168 C146,168 152,175 154,185.5 C157,184 160,183.5 164,183.5 C171,183.5 175.6,191 175.6,203 Z" fill="#71b89d"/>
 <!-- lamp top behind awning -->
 <path d="M268,96 L292.6,96 Q290,100 280.5,100.5 Q271,100 268,96 Z" fill="#a8cfcf"/>
 <rect x="279.4" y="96" width="3" height="5" fill="#3c5f68"/>
 <!-- tree -->
 <polygon points="324.5,98.2 339.5,129.4 333.2,129.4 344,153.9 337.4,153.9 348.2,181 300.8,181 311.6,153.9 305,153.9 315.8,129.4 309.5,129.4" fill="#f7f9f9"/>
 <rect x="321.8" y="181" width="4.2" height="22" fill="#3c5f68"/>
 <!-- house -->
 <rect x="195" y="128" width="118.5" height="75" fill="#a8cfcf"/>
 <rect x="206.3" y="150" width="23.7" height="53" fill="#3c5f68"/>
 <rect x="245.5" y="150.5" width="56.5" height="9" fill="#71b89d"/>
 <rect x="245.5" y="160.5" width="56.5" height="22.5" fill="#fff"/>
 <path d="M202,99.5 L307.6,99.5 L322.5,127 Q324.5,131 320,132 Q316,137 310,137 Q304,137 299.3,132.5 Q294.5,137 288.5,137 Q282.5,137 277.8,132.5 Q273,137 267,137 Q261,137 256.3,132.5 Q251.5,137 245.5,137 Q239.5,137 234.8,132.5 Q230,137 224,137 Q218,137 213.3,132.5 Q208.5,137 202.5,137 Q196.5,137 192,132 Q186,131 187.5,127 Z" fill="#ea6cc2"/>
 <!-- pink left panel -->
 <path d="M386.7,96 L455.5,96 L455.5,203 L360.5,203 L360.5,165 C361,140 374,116 386.7,96 Z" fill="#e96cc2"/>
 <!-- street lamp curved -->
 <path d="M412.5,186 L412.5,130 Q412.5,116.6 425,116.6 L441.5,116.6" stroke="#3c5f68" stroke-width="3.7" fill="none"/>
 <polygon points="409.5,184 415.5,184 416,203 409,203" fill="#3c5f68"/>
 <path d="M426.5,118.3 L440.8,118.3 Q440,120.5 433.5,120.5 Q427,120.5 426.5,118.3 Z" fill="#fff"/>
 <!-- building -->
 <rect x="455.5" y="96" width="108.8" height="68" fill="#fafafa"/>
 <g fill="#a8cfcf">
  <rect x="470.3" y="96" width="20.5" height="10.5"/><rect x="499.5" y="96" width="20.7" height="10.5"/><rect x="528.3" y="96" width="21" height="10.5"/>
  <rect x="470.3" y="116.7" width="20.5" height="31"/><rect x="499.5" y="116.7" width="20.7" height="31"/><rect x="528.3" y="116.7" width="21" height="31"/>
 </g>
 <rect x="455.5" y="164" width="109" height="39" fill="#3c5f68"/>
 <!-- pink right panel -->
 <path d="M564,96 L723.7,96 L739.6,127.4 L739.6,203 L564,203 Z" fill="#e96cc2"/>
 <!-- woman top -->
 <g>
  <path d="M636,156 L641,156 L641,189 L636,189 Z M647.4,156 L654.6,156 L653.8,189 L648.5,189 Z" fill="#f5a6dc"/>
  <path d="M636,188.6 L642,188.6 L643,200 L645,203 L634,203 L636,199 Z M648.5,188.6 L654,188.6 L654,199 L665,203 L652,203 Z" fill="#3c5f68"/>
  <path d="M636.5,96 L651.5,96 L656.5,118 L657.5,124 L654.6,156.5 L635,156.5 L630.8,124 L632,112 Z" fill="#3c5f68"/>
  <path d="M632.8,96 L638,96 L630,118 L626.3,131.2 L622.6,130.2 L627.5,112 Z" fill="#3c5f68"/>
  <path d="M650,96 L654.7,96 L660.5,113 L670.8,132.3 L667.4,134 L656.5,117 Z" fill="#3c5f68"/>
  <path d="M648.4,96 L639,122.5" stroke="#71b89d" stroke-width="1.2"/>
  <path d="M630.8,123 Q635,121 641,122 L640.7,129 Q636,132 631,131.5 Z" fill="#71b89d"/>
  <path d="M620.4,135.6 L627,135.6 L627,164.7 L625,162 L623,164.7 L620.4,162 Z" fill="#a8cfcf"/>
  <path d="M622,135.6 Q624,130 626,135.6" stroke="#fff" stroke-width="0.8" fill="none"/>
  <path d="M661,140.8 L670.2,140.8 L670.2,161.6 L666,159.5 L661,161.6 Z" fill="#fafafa"/>
  <path d="M667,138.7 L674.4,138.7 L674.4,167.8 L670.7,165 L667,167.8 Z" fill="#a8cfcf"/>
  <path d="M672.3,140.8 L680.6,140.8 L680.6,167.8 L676.5,165 L672.3,167.8 Z" fill="#3c5f68"/>
  <path d="M665,141 Q667,134 670,134 Q672,135 673,140" stroke="#fafafa" stroke-width="0.8" fill="none"/>
 </g>
 <!-- middle row -->
 <rect x="45" y="203" width="178" height="265" fill="#a8cfcf"/>
 <rect x="222.5" y="203" width="517.3" height="218.5" fill="#71b89d"/>
 <rect x="222.5" y="421.3" width="258.5" height="46.7" fill="#fff"/>
 <polygon points="481,422 739.6,216.2 739.6,468 481,468" fill="#3c5f68"/>
 <!-- clouds -->
 <path d="M128.6,260 Q132,251 142.5,249.9 Q147,249.9 150,251.4 Q152,248 156.8,248 Q163,248.5 163.9,255.5 Q170,256 173.3,260 Z" fill="#fff"/>
 <path d="M378.7,250.8 Q380,244.5 385.2,244.1 Q388,244 389.7,244.4 Q392,241.6 396.4,241.6 Q404,242 406.3,250.8 Z" fill="#fff"/>
 <path d="M528.75,262.5 Q534,254 546,253.4 Q549,253.4 550.6,253.8 Q552,246.5 560,246.5 Q567,246.5 569,251.5 Q575,249.6 582,251.4 Q598,252 605.6,262.5 Z" fill="#fff"/>
 <!-- white tree -->
 <ellipse cx="177.6" cy="376" rx="22" ry="35" fill="#fafafa"/>
 <circle cx="177.3" cy="413.5" r="27.2" fill="#fafafa"/>
 <rect x="176.4" y="416.5" width="3.7" height="51" fill="#3c5f68"/>
 <path d="M166.4,423.7 L177,434.2" stroke="#3c5f68" stroke-width="1.8"/>
 <!-- pink hill -->
 <path d="M45,422 C75,421 120,432 163.2,467.8 L45,467.8 Z" fill="#e96cc2"/>
 <!-- left man -->
 <g>
  <path d="M79,348 L106.5,348 L113.8,381.4 L100.2,418.5 L95.6,418 L103.8,382 L91.4,359 L84.6,424 L80.5,424 Z" fill="#e96cc2"/>
  <path d="M80.5,423 L85,423 L89.5,426 L80,426.5 Z M95.5,417.5 L100.5,418 L101.5,425.5 L98,424 Z" fill="#3c5f68"/>
  <path d="M90,290 L99.6,290 L99.3,303.6 L94,307.5 L90.5,303.6 Z" fill="#f5a6dc"/>
  <path d="M88.8,295 Q87.5,284 95,283.8 L101.8,284.3 Q100,288 99.6,291 L91,291 L90.5,295 Z" fill="#3c5f68"/>
  <path d="M78.6,305.5 Q80,304 84,304 L90.5,304 L94,307.5 L98,304 L104,304 Q107.5,304 108.2,307 L111.8,333 L118.5,357.5 L114.5,358.5 L110.5,339 L107.3,326 L106.9,348.4 L78.2,348.4 L78.2,323 L71.5,337 L70.8,360.4 L65.8,360.4 L66.3,333.6 Z" fill="#3c5f68"/>
  <path d="M66,360 L70.8,360 L71.5,364 L68,364.5 Z M114.5,358 L118.5,357.3 L119,361.5 L116,362 Z" fill="#f5a6dc"/>
  <path d="M63.5,371.5 Q66,364 69,363 M69,363 Q72,366 73.5,372" stroke="#fafafa" stroke-width="0.9" fill="none"/>
  <path d="M62,371 L69.8,371.6 L68.6,395 L64.5,392.5 L60.5,394.2 Z" fill="#fafafa"/>
  <path d="M74.3,372 L82.9,372 L82.9,401.5 L78.6,398.5 L74.3,401.5 Z" fill="#8a9a9e"/>
  <path d="M72,362 Q76,366 78,372" stroke="#8a9a9e" stroke-width="0.8" fill="none"/>
  <path d="M113.5,365 L121.6,365 L121.6,396.9 L117.5,394 L113.5,396.9 Z" fill="#fafafa"/>
  <path d="M114.5,365.5 Q116,359 117.5,361 Q120,360 120.5,365.5" stroke="#fafafa" stroke-width="0.9" fill="none"/>
 </g>
 <!-- lamp center -->
 <g fill="#3c5f68">
  <circle cx="469.7" cy="237.8" r="1.6"/>
  <polygon points="469.7,237 480,246.6 460.2,246.6"/>
  <polygon points="461,247 479.5,247 474.8,260.5 465.9,260.5" fill="#fafafa"/>
  <rect x="468.9" y="246.6" width="2.1" height="14"/>
  <rect x="464.5" y="260.3" width="11" height="2.8"/>
  <polygon points="468,263 472,263 472.9,391 467.1,391"/>
  <rect x="466.3" y="327.5" width="7.4" height="2"/>
  <polygon points="465.5,390.6 474.4,390.6 475.7,421.3 464.2,421.3"/>
 </g>
 <!-- grass -->
 <path d="M395.3,467.8 L398.1,462.6 L402.8,465.8 L407.2,462.6 L409.6,467.8 Z" fill="#71b89d"/>
 <path d="M389,467.6 H416" stroke="#9ab0aa" stroke-width="0.6"/>
 <!-- right building -->
 <rect x="622" y="356" width="95.4" height="112" fill="#a8cfcf"/>
 <polygon points="619.5,348 719.2,348 717.5,357 621.5,357" fill="#fafafa"/>
 <g fill="#fafafa">
  <rect x="637.4" y="377.5" width="25.5" height="30.5"/><rect x="675.6" y="377.5" width="25.4" height="30.5"/>
  <rect x="637.4" y="425.4" width="25.5" height="29.6"/><rect x="675.6" y="425.4" width="25.4" height="29.6"/>
 </g>
 <!-- couple -->
 <g>
  <!-- man legs -->
  <path d="M288.4,343 L316.6,343 L317,420 L321.5,422 L309,422 L308.5,380 L303,350 L282,420 L278,422 L270.5,422 L275,418 Z" fill="#3c5f68"/>
  <!-- woman legs -->
  <path d="M322.2,377 L328.8,377 L320.3,420 L315.6,420 Z M334.4,377 L341,377 L339,420 L334.4,420 Z" fill="#f5a6dc"/>
  <path d="M334,419.5 L340,419.5 L342,422 L333,422 Z" fill="#d8e8e2"/>
  <path d="M313,420 L320.5,420 L321,422 L312,422 Z" fill="#3c5f68"/>
  <!-- skirt -->
  <polygon points="320.3,352.8 344.7,352.8 344.7,377.2 320.8,377.2" fill="#3c5f68"/>
  <!-- blouse + arm -->
  <path d="M316,296 L331,293.9 L336,302 L341,293.9 L347,296 L350.5,318 L365.5,297.5 L369,293.5 L372.5,295 L373.5,299.5 L355.5,329 L351,333 L346,331 L345.6,352.8 L318.4,352.8 L319,330 Z" fill="#fafafa"/>
  <path d="M331.5,282 L340.6,282 L340.5,295 L336,302 L332,295 Z" fill="#f5a6dc"/>
  <path d="M327,283 Q327,276.6 334,276.6 L341.5,277 L341.5,283 L333,283 L331.5,288.4 Q327,287 327,283 Z" fill="#3c5f68"/>
  <!-- man shirt -->
  <rect x="294" y="288" width="14.7" height="54" fill="#a8cfbf"/>
  <path d="M297.8,277 L307.3,277 L307,288.4 L302,292 L298,288.4 Z" fill="#f5a6dc"/>
  <path d="M297.4,277.5 Q297.4,269.3 303,269.3 L307.8,269.6 L307.8,277.5 Z" fill="#3c5f68"/>
  <path d="M296,288 L301.5,292 L307,288 L306.5,292 L301.5,294 L296.5,292 Z" fill="#e8f0ec"/>
  <!-- jacket -->
  <path d="M282.3,290.2 L294,288 L294,343.4 L288.4,343.4 L289,337 L281,320 L270.5,316.6 Z" fill="#3c5f68"/>
  <path d="M270.5,316.6 L282.3,290.2 L286,300 L280,316 L294,337 L292,340 Z" fill="#3c5f68"/>
  <path d="M308.7,288 L313.3,290.2 L316.6,310 L331,331 L329,334 L316.6,322 L316.6,343.4 L308.7,343.4 Z" fill="#3c5f68"/>
  <path d="M290,335 L295,337 L292,340 Z" fill="#f5a6dc"/>
  <path d="M329,331 L334,333 L336,336 L330,335 Z" fill="#f5a6dc"/>
  <path d="M323,342 L326,344 L325,348 Z" fill="#f5a6dc"/>
  <!-- cart -->

  <rect x="357" y="362.2" width="39.2" height="17" fill="#e96cc2"/>
  <rect x="367" y="367.5" width="16" height="12" fill="#fafafa"/>
  <polygon points="368,366 383,353.5 390,357 375,371" fill="#3c5f68"/>
  <g stroke="#fafafa" stroke-width="2" fill="none" stroke-linejoin="round">
   <path d="M346.6,348.5 L405.6,348.5 L394.4,381 L353,381 Z"/>
   <path d="M350,366 L400,366"/>
   <path d="M361.5,348.5 L364,381 M388.5,348.5 L386,381"/>
   <path d="M353,381 L348.4,410 L389.7,410"/>
  </g>
  <circle cx="353.1" cy="417.5" r="3.3" fill="#3c5f68"/>
  <circle cx="385" cy="417.5" r="3.3" fill="#3c5f68"/>
  <path d="M353.1,410 L353.1,414 M385,410 L385,414" stroke="#fafafa" stroke-width="1.5"/>
 </g>
</g>
</svg>
</body></html>
